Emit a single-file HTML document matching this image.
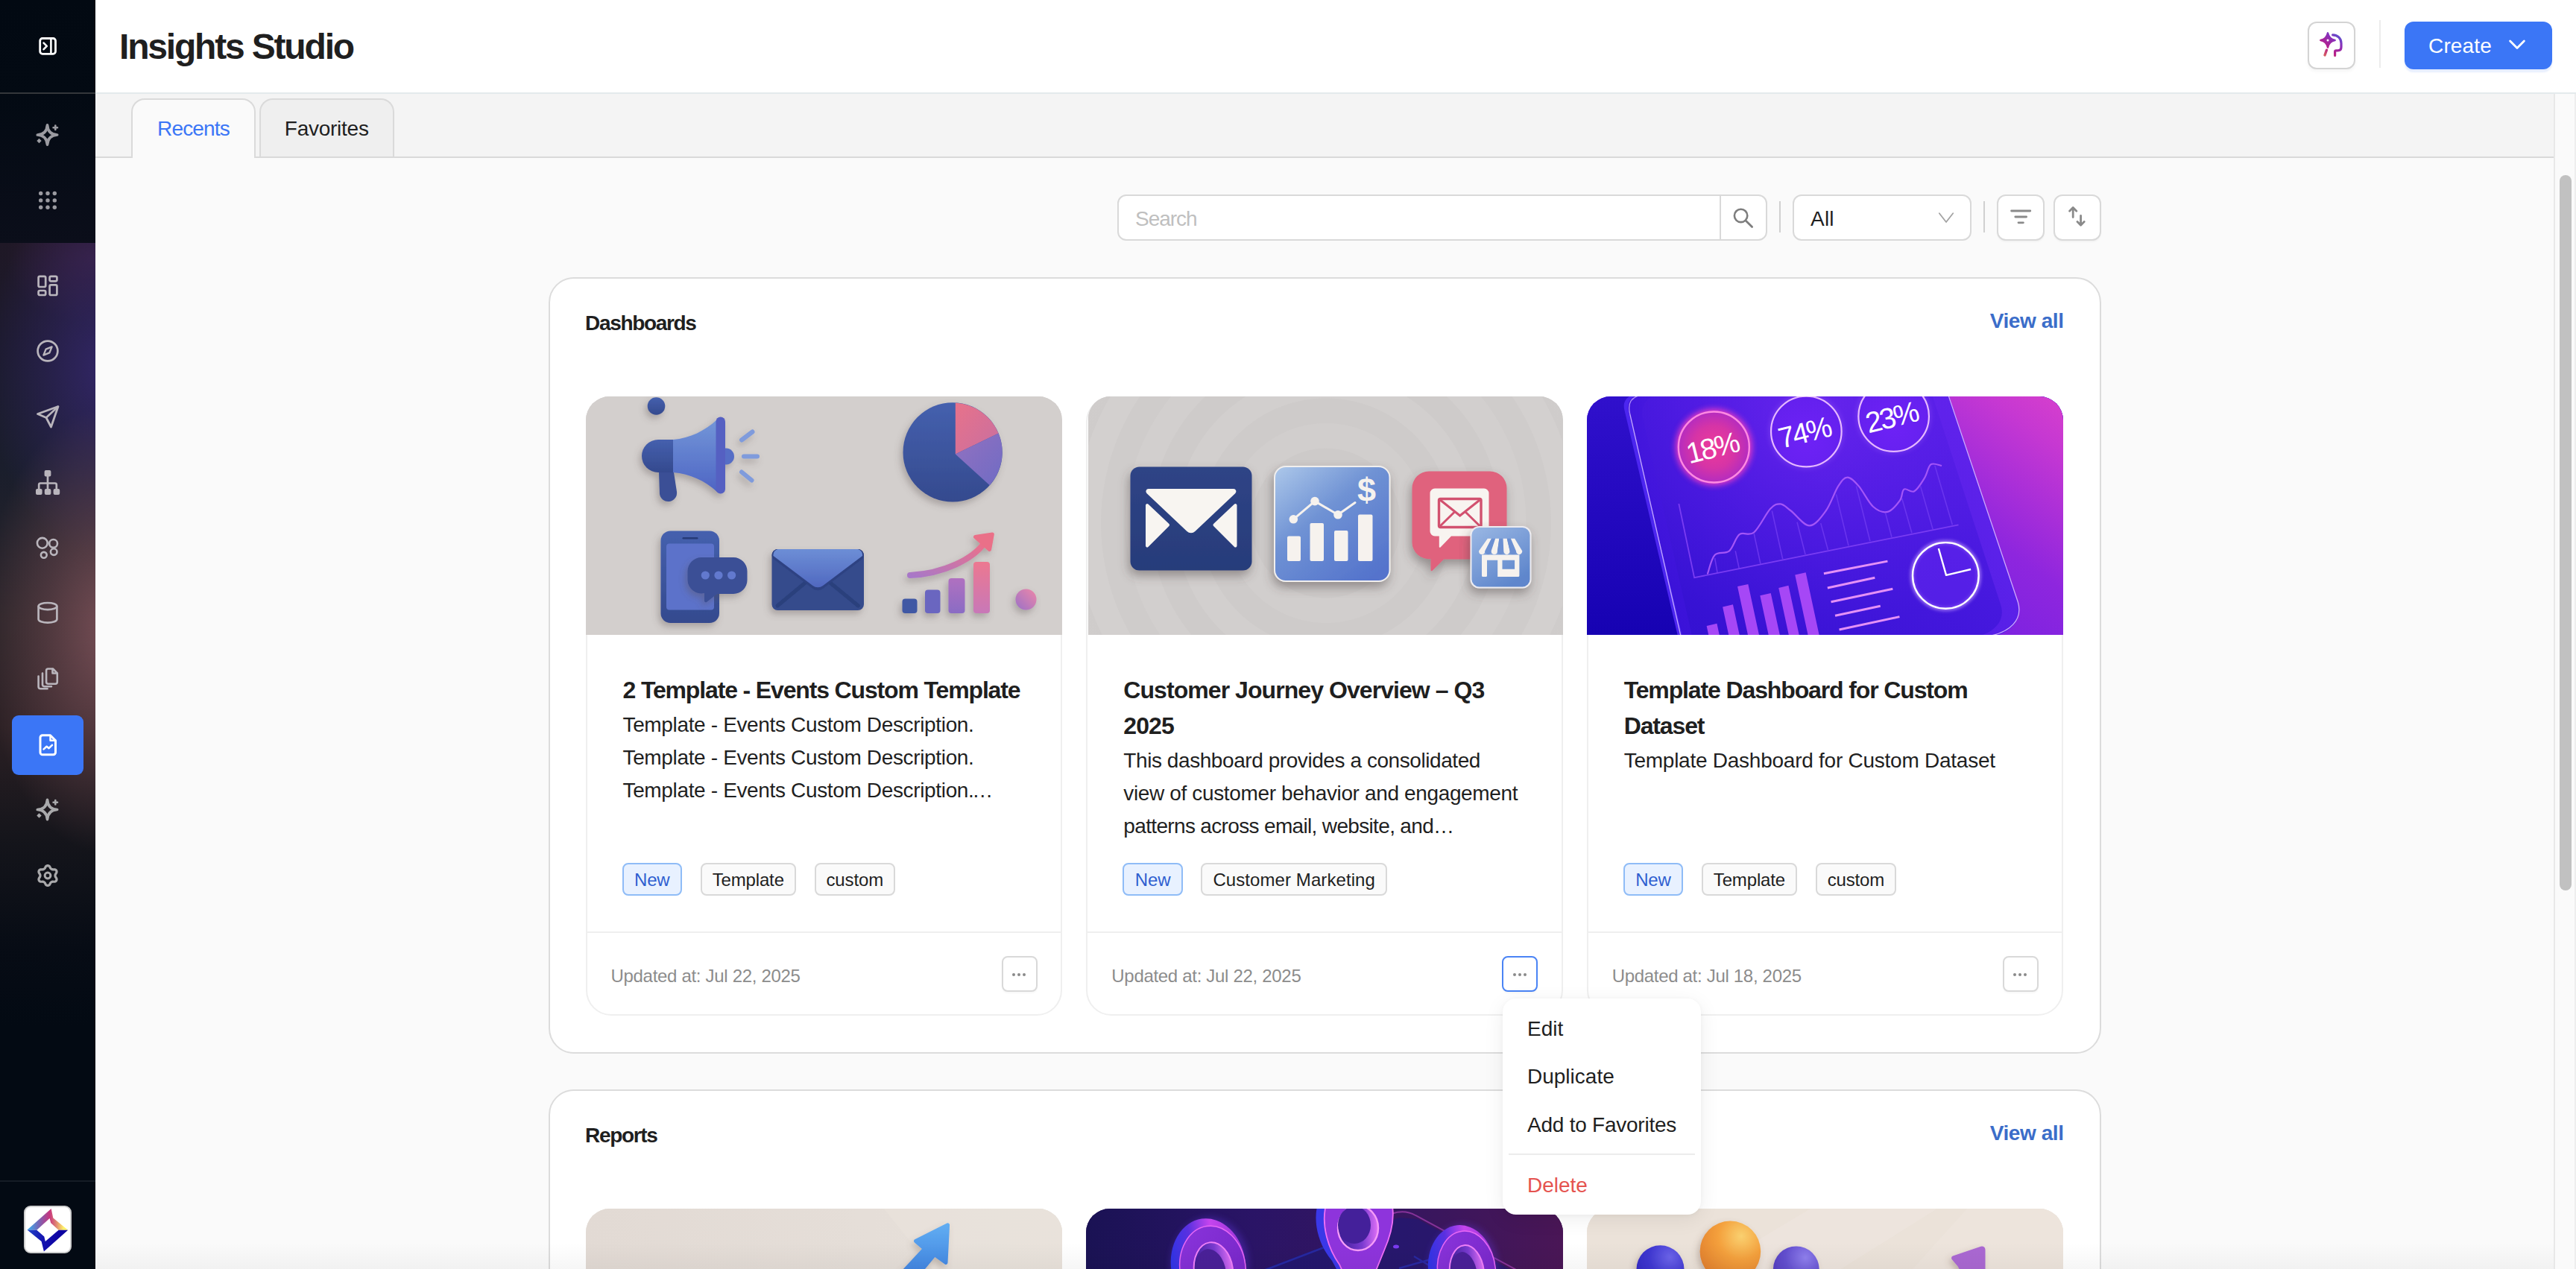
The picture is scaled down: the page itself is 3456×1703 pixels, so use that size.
<!DOCTYPE html>
<html>
<head>
<meta charset="utf-8">
<title>Insights Studio</title>
<style>
*{box-sizing:border-box;margin:0;padding:0}
html,body{width:3456px;height:1703px;overflow:hidden;background:#fafafa;font-family:"Liberation Sans",sans-serif;color:#1f1f1f}
.abs{position:absolute}
/* sidebar */
#side{position:absolute;left:0;top:0;width:128px;height:1703px;background:linear-gradient(180deg,#020912 0,#030a13 126px,#0b0e1a 326px,#030a13 327px);overflow:hidden}
#side .grad{position:absolute;left:0;top:326px;width:128px;height:1050px;
 background:
  radial-gradient(ellipse 170px 300px at 146px 520px, rgba(126,82,90,.9), rgba(126,82,90,.42) 50%, rgba(126,82,90,0) 100%),
  radial-gradient(ellipse 160px 250px at 142px 170px, rgba(54,40,112,.85), rgba(54,40,112,.4) 50%, rgba(54,40,112,0) 100%),
  radial-gradient(ellipse 120px 90px at 128px 20px, rgba(70,36,76,.6), rgba(70,36,76,0) 100%),
  linear-gradient(180deg,#1f1826 0,#1b1a2c 14%,#1a1e2c 29%,#2a2428 48%,#2b2024 62%,#15151b 76%,#070c15 90%,#030a13 100%);}
#side .ln{position:absolute;left:0;width:128px;height:2px;background:#20262e}
#side svg{position:absolute}
#side .act{position:absolute;left:16px;top:960px;width:96px;height:80px;border-radius:9px;background:#3b76f6}
#logo{position:absolute;left:32px;top:1618px;width:64px;height:64px;border-radius:9px;background:#fff;border:2px solid #cfcfcf}
/* header */
#hdr{position:absolute;left:128px;top:0;width:3328px;height:126px;background:#fff;border-bottom:2px solid #e4eaec}
#hdr h1{position:absolute;left:32px;top:31px;font-size:48px;line-height:64px;font-weight:700;letter-spacing:-2.18px;color:#1f1f1f;white-space:nowrap}
#aibtn{position:absolute;left:2968px;top:29px;width:64px;height:64px;border:2px solid #d4d4d4;border-radius:12px;background:#fff;box-shadow:0 3px 4px rgba(0,0,0,.04)}
#hdiv{position:absolute;left:3064px;top:27px;width:2px;height:64px;background:#ececec}
#create{position:absolute;left:3098px;top:29px;width:198px;height:64px;border-radius:12px;background:#3b76f6;box-shadow:0 4px 2px rgba(59,118,246,.12);color:#fff;font-size:28px;line-height:66px;padding-left:32px;letter-spacing:.16px}
/* tabs */
#tabs{position:absolute;left:128px;top:126px;width:3300px;height:86px;background:#f4f4f4;border-bottom:2px solid #d9d9d9}
.tab{position:absolute;top:6px;height:78px;border:2px solid #dadada;border-bottom:none;border-radius:18px 18px 0 0;font-size:28px;line-height:78px;text-align:center;white-space:nowrap}
#t1{left:48px;width:167px;background:#fafafa;color:#3b76f6;height:80px;letter-spacing:-.82px}
#t2{left:219.5px;width:181.5px;background:#efefef;color:#1f1f1f;height:78px;letter-spacing:-.26px}
/* scrollbar */
#sbar{position:absolute;left:3426px;top:126px;width:30px;height:1577px;background:#fafafa;border-left:2px solid #e8e8e8;border-right:2px solid #eee}
#sthumb{position:absolute;left:6px;top:109px;width:16px;height:960px;border-radius:8px;background:#c1c1c1}
/* toolbar */
.box{position:absolute;top:261px;height:62px;border:2px solid #d9d9d9;border-radius:12px;background:#fff}
.vdiv{position:absolute;top:270px;width:2px;height:42px;background:#d0d0d0}
/* panels */
.panel{position:absolute;left:735.5px;width:2083px;border:2px solid #dcdcdc;border-radius:34px;background:#fff}
.ph{position:absolute;left:47.5px;font-size:28px;font-weight:700;letter-spacing:-1.32px;color:#1f1f1f;white-space:nowrap}
.va{position:absolute;right:48px;font-size:28px;font-weight:700;letter-spacing:-.43px;color:#3b6dc9;white-space:nowrap}
.card{position:absolute;top:158px;width:639.33px;height:831px;border:2px solid #efefef;border-radius:34px;background:#fff}
.card .img{position:absolute;left:-2px;top:-2px;width:639.33px;height:320px;border-radius:32px 32px 0 0;overflow:hidden}
.card .img svg{display:block}
.card h3{position:absolute;left:48px;top:368px;width:580px;white-space:nowrap;font-size:32px;line-height:48px;font-weight:700;letter-spacing:-1.1px;color:#1f1f1f}
.card p{position:absolute;left:48px;width:560px;font-size:28px;line-height:44px;letter-spacing:-.35px;color:#1f1f1f;white-space:nowrap}
.tag{position:absolute;top:624.3px;height:43.4px;border:2px solid #d9d9d9;border-radius:8px;background:#fafafa;font-size:24px;line-height:41.5px;text-align:center;color:#1f1f1f;white-space:nowrap;letter-spacing:-.15px}
.tag.new{background:#e8f1ff;border-color:#8fbcf7;color:#2f5fd0}
.card .ft{position:absolute;left:0;top:715.5px;width:635.33px;height:2px;background:#efefef}
.card .upd{position:absolute;left:32px;top:760px;font-size:24px;line-height:32px;color:#8c8c8c;white-space:nowrap;letter-spacing:-.31px}
.more{position:absolute;left:556px;top:749px;width:48px;height:48px;border:2px solid #d9d9d9;border-radius:8px;background:#fff;box-shadow:0 2px 2px rgba(0,0,0,.03)}
.more.on{border-color:#4a84f5}
.more i{position:absolute;top:20.8px;width:4.4px;height:4.4px;background:#8a8a8a;border-radius:50%}
/* menu */
#menu{position:absolute;left:2016px;top:1340px;width:266px;height:290px;border-radius:18px;background:#fff;box-shadow:0 6px 28px rgba(0,0,0,.07),0 1px 6px rgba(0,0,0,.04)}
#menu div{position:absolute;left:33px;font-size:28px;line-height:40px;white-space:nowrap;letter-spacing:0;color:#1f1f1f}
#menu hr{position:absolute;left:8px;top:208px;width:250px;height:2px;border:0;background:#ececec}
</style>
</head>
<body>
<!-- SIDEBAR -->
<div id="side">
  <div class="grad"></div>
  <div class="ln" style="top:124px;background:#34373b"></div>
  <div class="ln" style="top:1584px;background:#161d26"></div>
  <div class="act"></div>
  <div id="logo"><svg width="60" height="60" viewBox="2 2 60 60" style="position:absolute;left:0;top:0"><defs><linearGradient id="lg1" x1="4.5" y1="0" x2="59" y2="0" gradientUnits="userSpaceOnUse"><stop offset="0" stop-color="#35b2f2"/><stop offset=".28" stop-color="#7567b8"/><stop offset=".55" stop-color="#c7357f"/><stop offset=".72" stop-color="#e08a72"/><stop offset=".9" stop-color="#fff46a"/><stop offset="1" stop-color="#fff46a"/></linearGradient><linearGradient id="lg2" x1="4.5" y1="33" x2="50" y2="45" gradientUnits="userSpaceOnUse"><stop offset="0" stop-color="#2244c8"/><stop offset=".5" stop-color="#1414b0"/><stop offset="1" stop-color="#0c00a0"/></linearGradient></defs><path d="M4.5,32.6L36.7,3.9L39.3,16.5L59.2,32.7H46.6L36.2,23.3L34.6,17L17.3,32.7z" fill="url(#lg1)"/><path d="M4.5,32.5L17.3,32.7L27.3,41.6L28.8,47.9L46.6,32.7H59.2L26.9,61.5L23.6,47.9z" fill="url(#lg2)"/></svg></div>
  <svg class="abs" style="left:0;top:0" width="128" height="1703" viewBox="0 0 128 1703" fill="none"><rect x="53.7" y="51.5" width="20.8" height="20.8" rx="3.2" stroke="#fff" stroke-width="2.8"/><path d="M68.4,52v20" stroke="#fff" stroke-width="2.6"/><path d="M58.6,57.6l4.2,4.3l-4.2,4.3" stroke="#fff" stroke-width="2.6" stroke-linecap="round" stroke-linejoin="round"/><path d="M63.5,167.8 Q64.3,180.2 76.7,181 Q64.3,181.8 63.5,194.2 Q62.7,181.8 50.3,181 Q62.7,180.2 63.5,167.8Z" fill="none" stroke="#9b9ba1" stroke-width="3.7" stroke-linejoin="round"/><path d="M74.3,168.6v5.4M71.6,171.3h5.4" stroke="#9b9ba1" stroke-width="2.6" stroke-linecap="round"/><path d="M52.5,185.8l3.2,3.2l-3.2,3.2l-3.2,-3.2z" fill="#9b9ba1"/><circle cx="54.7" cy="259.5" r="2.7" fill="#9b9ba1"/><circle cx="64.0" cy="259.5" r="2.7" fill="#9b9ba1"/><circle cx="73.3" cy="259.5" r="2.7" fill="#9b9ba1"/><circle cx="54.7" cy="268.9" r="2.7" fill="#9b9ba1"/><circle cx="64.0" cy="268.9" r="2.7" fill="#9b9ba1"/><circle cx="73.3" cy="268.9" r="2.7" fill="#9b9ba1"/><circle cx="54.7" cy="278.3" r="2.7" fill="#9b9ba1"/><circle cx="64.0" cy="278.3" r="2.7" fill="#9b9ba1"/><circle cx="73.3" cy="278.3" r="2.7" fill="#9b9ba1"/><g stroke="#b9b5bc" stroke-width="2.7" stroke-linejoin="round"><rect x="51.6" y="370.8" width="9.6" height="14.2" rx="1.8"/><rect x="66.6" y="370.8" width="9.8" height="6.6" rx="1.8"/><rect x="51.6" y="390" width="9.6" height="6" rx="1.8"/><rect x="66.6" y="382.4" width="9.8" height="13.6" rx="1.8"/></g><circle cx="64" cy="471" r="13.4" stroke="#b9b5bc" stroke-width="2.7"/><path d="M69.6,465.4l-3.2,8l-8,3.2l3.2,-8z" stroke="#b9b5bc" stroke-width="2.4" stroke-linejoin="round"/><path d="M78,545.5L50.5,555.5l11.5,5l6.5,12.5z" stroke="#b9b5bc" stroke-width="2.8" stroke-linejoin="round"/><path d="M62,560.5L78,545.5" stroke="#b9b5bc" stroke-width="2.6"/><g fill="#b9b5bc"><rect x="59.6" y="631" width="8.8" height="8.6" rx="2"/><rect x="48" y="656" width="8.6" height="8" rx="2"/><rect x="59.8" y="656" width="8.6" height="8" rx="2"/><rect x="71.6" y="656" width="8.6" height="8" rx="2"/></g><path d="M64,639v17M52.2,656v-5.5a2,2 0 0 1 2,-2h19.6a2,2 0 0 1 2,2v5.5" stroke="#b9b5bc" stroke-width="2.7"/><g stroke="#b9b5bc" stroke-width="2.6"><circle cx="56.8" cy="728.8" r="6.9"/><circle cx="71.6" cy="729.4" r="5.4"/><circle cx="58.8" cy="744.8" r="3.9"/><circle cx="72.2" cy="740.6" r="4.3"/></g><g stroke="#b9b5bc" stroke-width="2.7"><ellipse cx="64" cy="813.6" rx="12.4" ry="4.6"/><path d="M51.6,813.6v17.4c0,2.6 5.5,4.7 12.4,4.7s12.4,-2.1 12.4,-4.7v-17.4"/></g><g stroke="#b9b5bc" stroke-width="2.6" stroke-linejoin="round" stroke-linecap="round"><path d="M64.5,897.5h6.5l5.8,5.8v12a2.4,2.4 0 0 1 -2.4,2.4h-9.9a2.4,2.4 0 0 1 -2.4,-2.4v-15.4a2.4,2.4 0 0 1 2.4,-2.4z"/><path d="M70.5,898v5.5h5.8"/><path d="M57,903.5v15.2a2.6,2.6 0 0 0 2.6,2.6h9.4"/><path d="M51.6,907.5v14a2.8,2.8 0 0 0 2.8,2.8h9.2"/></g><g stroke="#fff" stroke-width="3" stroke-linejoin="round" stroke-linecap="round"><path d="M57,986.8h10.5l7,7v16a3,3 0 0 1 -3,3h-14.5a3,3 0 0 1 -3,-3v-20a3,3 0 0 1 3,-3z"/><path d="M67.5,987.2v6.6h6.6" stroke-width="2.4"/><path d="M58.6,1005.4l4,-3.6l3,2.4l4.4,-4.4" stroke-width="2.6"/></g><path d="M63.5,1073.3 Q64.3,1085.7 76.7,1086.5 Q64.3,1087.3 63.5,1099.7 Q62.7,1087.3 50.3,1086.5 Q62.7,1085.7 63.5,1073.3Z" fill="none" stroke="#a9a9ab" stroke-width="3.7" stroke-linejoin="round"/><path d="M74.3,1074.1v5.4M71.6,1076.8h5.4" stroke="#a9a9ab" stroke-width="2.6" stroke-linecap="round"/><path d="M52.5,1091.3l3.2,3.2l-3.2,3.2l-3.2,-3.2z" fill="#a9a9ab"/><path d="M64.00,1161.60L65.15,1161.81L66.21,1162.45L67.03,1163.70L67.64,1164.99L68.29,1165.79L69.00,1166.34L69.83,1166.68L70.85,1166.84L72.27,1166.73L73.76,1166.81L74.84,1167.41L75.60,1168.30L76.00,1169.41L75.98,1170.64L75.30,1171.97L74.49,1173.15L74.12,1174.11L74.00,1175.00L74.12,1175.89L74.49,1176.85L75.30,1178.03L75.98,1179.36L76.00,1180.59L75.60,1181.70L74.84,1182.59L73.76,1183.19L72.27,1183.27L70.85,1183.16L69.83,1183.32L69.00,1183.66L68.29,1184.21L67.64,1185.01L67.03,1186.30L66.21,1187.55L65.15,1188.19L64.00,1188.40L62.85,1188.19L61.79,1187.55L60.97,1186.30L60.36,1185.01L59.71,1184.21L59.00,1183.66L58.17,1183.32L57.15,1183.16L55.73,1183.27L54.24,1183.19L53.16,1182.59L52.40,1181.70L52.00,1180.59L52.02,1179.36L52.70,1178.03L53.51,1176.85L53.88,1175.89L54.00,1175.00L53.88,1174.11L53.51,1173.15L52.70,1171.97L52.02,1170.64L52.00,1169.41L52.40,1168.30L53.16,1167.41L54.24,1166.81L55.73,1166.73L57.15,1166.84L58.17,1166.68L59.00,1166.34L59.71,1165.79L60.36,1164.99L60.97,1163.70L61.79,1162.45L62.85,1161.81Z" fill="none" stroke="#a9a9ab" stroke-width="3.2" stroke-linejoin="round"/><circle cx="64" cy="1175" r="3.9" fill="none" stroke="#a9a9ab" stroke-width="3"/></svg>
</div>

<!-- HEADER -->
<div id="hdr">
  <h1>Insights Studio</h1>
  <div id="aibtn"><svg width="60" height="60" viewBox="2 2 60 60" style="position:absolute;left:0;top:0" fill="none"><defs><linearGradient id="ag" x1="46" y1="16" x2="22" y2="46" gradientUnits="userSpaceOnUse"><stop offset="0" stop-color="#4a63d8"/><stop offset=".35" stop-color="#8a2fb8"/><stop offset=".7" stop-color="#b51f8c"/><stop offset="1" stop-color="#d9605c"/></linearGradient></defs><path d="M27,15.4Q28.6,23.4 36.6,25Q28.6,26.6 27,34.6Q25.4,26.6 17.4,25Q25.4,23.4 27,15.4Z" fill="url(#ag)" stroke="url(#ag)" stroke-width="2.6" stroke-linejoin="round"/><circle cx="27" cy="25" r="1.5" fill="#fff"/><path d="M33.6,17.8C40.6,18 45,23 45,29v5.2c0,3 -2,4.6 -4.6,4.6h-2.2c-1,0 -1.6,.6 -1.6,1.6v5.2" stroke="url(#ag)" stroke-width="3.2" stroke-linecap="round" stroke-linejoin="round"/><path d="M25.4,38.2L23,45" stroke="url(#ag)" stroke-width="3.4" stroke-linecap="round"/></svg></div>
  <div id="hdiv"></div>
  <div id="create">Create<svg class="abs" style="left:139px;top:23px" width="24" height="16" viewBox="0 0 24 16" fill="none"><path d="M2.6,3L12,12.4L21.4,3" stroke="#fff" stroke-width="2.8" stroke-linecap="round" stroke-linejoin="round"/></svg></div>
</div>

<!-- TABS -->
<div id="tabs">
  <div class="tab" id="t1">Recents</div>
  <div class="tab" id="t2">Favorites</div>
</div>
<div id="sbar"><div id="sthumb"></div></div>

<!-- TOOLBAR -->
<div class="box" style="left:1499px;width:872px"></div>
<div class="abs" style="left:2307px;top:263px;width:2px;height:58px;background:#d9d9d9"></div>
<div class="abs" style="left:1523px;top:276px;font-size:28px;line-height:36px;color:#bfbfbf;letter-spacing:-1.05px">Search</div>
<div class="vdiv" style="left:2387px"></div>
<div class="box" style="left:2405px;width:240px"></div>
<div class="abs" style="left:2429px;top:276px;font-size:28px;line-height:36px;color:#1f1f1f;letter-spacing:.2px">All</div>
<div class="vdiv" style="left:2661px"></div>
<div class="box" style="left:2679px;width:64px;box-shadow:0 2px 2px rgba(0,0,0,.03)"></div>
<div class="box" style="left:2755px;width:64px;box-shadow:0 2px 2px rgba(0,0,0,.03)"></div>

<svg class="abs" style="left:2300px;top:255px" width="530" height="76" viewBox="2300 255 530 76" fill="none"><circle cx="2335.6" cy="289.4" r="8.7" stroke="#7d7d7d" stroke-width="2.6"/><path d="M2342,296l8.6,8.6" stroke="#7d7d7d" stroke-width="2.8" stroke-linecap="round"/><path d="M2601.8,286.2L2611,298L2620.2,286.2" stroke="#a3a3a3" stroke-width="1.8" stroke-linecap="round" stroke-linejoin="round"/><path d="M2698.6,283h25.2M2703.8,291h14.8M2708,298.8h6.4" stroke="#8a8a8a" stroke-width="2.8" stroke-linecap="round"/><path d="M2781.2,291.5v-12.5M2776.6,283.2l4.6,-4.6l4.6,4.6M2791.6,289.5v12.5M2787,297.6l4.6,4.6l4.6,-4.6" stroke="#8a8a8a" stroke-width="2.8" stroke-linecap="round" stroke-linejoin="round"/></svg>

<!-- DASHBOARDS PANEL -->
<div class="panel" id="p1" style="top:372px;height:1042px">
  <div class="ph" style="top:42px;line-height:36px">Dashboards</div>
  <div class="va" style="top:39px;line-height:36px">View all</div>

  <div class="card" style="left:48px">
    <div class="img" id="img1" style="background:#d3cfcd"><svg width="638" height="321" viewBox="0 0 638 321">
<defs>
<filter id="i1s" x="-20%" y="-20%" width="150%" height="150%"><feDropShadow dx="-3" dy="5" stdDeviation="5" flood-color="#5a5050" flood-opacity=".35"/></filter>
<linearGradient id="i1a" x1="0" y1="0" x2="0" y2="1"><stop offset="0" stop-color="#4560ae"/><stop offset="1" stop-color="#344a8e"/></linearGradient>
<linearGradient id="i1b" x1="0" y1="0" x2="0" y2="1"><stop offset="0" stop-color="#7396d8"/><stop offset="1" stop-color="#4e65c4"/></linearGradient>
<linearGradient id="i1c" x1="0" y1="0" x2="1" y2="1"><stop offset="0" stop-color="#e8728a"/><stop offset="1" stop-color="#c86fa0"/></linearGradient>
<linearGradient id="i1d" x1="0" y1="0" x2="1" y2="1"><stop offset="0" stop-color="#9370c0"/><stop offset="1" stop-color="#6f6cc4"/></linearGradient>
<linearGradient id="i1e" x1="0" y1="1" x2="1" y2="0"><stop offset="0" stop-color="#a878c8"/><stop offset="1" stop-color="#ee7088"/></linearGradient>
<linearGradient id="i1f" x1="0" y1="0" x2="0" y2="1"><stop offset="0" stop-color="#6d8ed6"/><stop offset="1" stop-color="#5068c0"/></linearGradient>
<linearGradient id="i1g" x1="0" y1="0" x2="0" y2="1"><stop offset="0" stop-color="#b070c0"/><stop offset="1" stop-color="#8a6cc4"/></linearGradient>
<linearGradient id="i1h" x1="0" y1="0" x2="0" y2="1"><stop offset="0" stop-color="#ec7890"/><stop offset="1" stop-color="#c878b8"/></linearGradient>
<linearGradient id="i1i" x1="1" y1="0" x2="0" y2="1"><stop offset="0" stop-color="#ee88a8"/><stop offset="1" stop-color="#9a70c8"/></linearGradient>
</defs>
<rect width="638" height="321" fill="#d3cfcd"/>
<g filter="url(#i1s)">
 <!-- small ball -->
 <circle cx="94.5" cy="13" r="11.8" fill="url(#i1a)"/>
 <!-- megaphone -->
 <path d="M98,102 l20,0 l4,26 a11.5,11.5 0 0 1 -23,3 z" fill="#3a5096"/>
 <path d="M97,58 h21 v44 h-21 a22,22 0 0 1 0,-44z" fill="url(#i1a)"/>
 <circle cx="188" cy="80.5" r="11" fill="#566ec6"/>
 <path d="M117,58 C140,56 160,46 176,31 V128 C160,113 140,104 117,102z" fill="url(#i1b)"/>
 <rect x="174.5" y="27.5" width="12.5" height="103" rx="6.2" fill="#5560c2"/>
 <path d="M209,58.5 L223.5,47.5 M212,80.5 H230 M209,101.5 L222.5,112.5" stroke="#7f9bdc" stroke-width="6" stroke-linecap="round" fill="none"/>
 <!-- pie -->
 <circle cx="492.1" cy="74.9" r="66.6" fill="url(#i1a)"/>
 <path d="M495.8,77.6 L495.8,8.4 A66.6,66.6 0 0 1 553.6,49.6 Z" fill="url(#i1c)"/>
 <path d="M495.8,77.6 L553.6,49.6 A66.6,66.6 0 0 1 541.8,119.2 Z" fill="url(#i1d)"/>
 <!-- phone -->
 <rect x="100.5" y="180.5" width="78.5" height="123.5" rx="13" fill="url(#i1a)"/>
 <rect x="108" y="197.5" width="64" height="89" rx="4" fill="#5c72ca"/>
 <rect x="129.5" y="189" width="21" height="2.6" rx="1.3" fill="#263a78"/>
</g>
<g filter="url(#i1s)">
 <!-- chat bubble -->
 <path d="M155,216 h43 a18.5,18.5 0 0 1 18.5,18.5 v12 a18.5,18.5 0 0 1 -18.5,18.5 h-22 l-14,11 a2,2 0 0 1 -3,-2 v-10 a18.5,18.5 0 0 1 -22.5,-17.500 v-12 a18.500,18.500 0 0 1 18.500,-18.500z" fill="#3a5096"/>
 <circle cx="160.300" cy="240" r="5.600" fill="#6279ce"/><circle cx="178" cy="240" r="5.600" fill="#6279ce"/><circle cx="195.600" cy="240" r="5.600" fill="#6279ce"/>
 <!-- envelope -->
 <rect x="249.500" y="205" width="123.500" height="82" rx="8" fill="#344b8c"/>
 <path d="M257,281 L298,247 M365.500,281 L324,247" stroke="#2a3f7c" stroke-width="5" stroke-linecap="round"/>
 <path d="M257.500,205 h107.500 a8,8 0 0 1 6,13 l-53,40 a11,11 0 0 1 -13.500,0 l-53,-40 a8,8 0 0 1 6,-13z" fill="#2d4282"/>
 <path d="M257.500,205 h107.500 a8,8 0 0 1 6,9 l-53,40 a11,11 0 0 1 -13.500,0 l-53,-40 a8,8 0 0 1 6,-9z" fill="url(#i1f)"/>
 <!-- bars -->
 <rect x="424.500" y="271.500" width="20" height="19.500" rx="4" fill="#3f58a4"/>
 <rect x="455" y="259.500" width="20.500" height="31.500" rx="4" fill="#6b66c0"/>
 <rect x="486.500" y="244" width="22" height="47" rx="4" fill="url(#i1g)"/>
 <rect x="520" y="222" width="22" height="69" rx="4" fill="url(#i1h)"/>
 <path d="M435,240 C480,238 520,218 535,196" stroke="url(#i1e)" stroke-width="8" stroke-linecap="round" fill="none"/>
 <path d="M522,186 L545,182.500 a2.500,2.500 0 0 1 2.800,3 L544,206 a2.500,2.500 0 0 1 -4,1.500 L521,190.500 a2.500,2.500 0 0 1 1,-4.500z" fill="#ea7088"/>
 <circle cx="590.500" cy="272.500" r="14" fill="url(#i1i)"/>
</g>
</svg></div>
    <h3 style="letter-spacing:-1.15px">2 Template - Events Custom Template</h3>
    <p style="top:417px">Template - Events Custom Description.<br>Template - Events Custom Description.<br>Template - Events Custom Description<span style="letter-spacing:-2.6px">.…</span></p>
    <div class="tag new" style="left:47px;width:80.5px">New</div>
    <div class="tag" style="left:152px;width:128.5px">Template</div>
    <div class="tag" style="left:305px;width:108.5px">custom</div>
    <div class="ft"></div>
    <div class="upd">Updated at: Jul 22, 2025</div>
    <div class="more"><i style="left:12.3px"></i><i style="left:19.3px"></i><i style="left:26.3px"></i></div>
  </div>

  <div class="card" style="left:719.83px">
    <div class="img" id="img2" style="background:#cfcccb;left:.67px;width:637px;border-radius:30px 32px 0 0"><svg width="638" height="321" viewBox="2 0 638 321">
<defs>
<filter id="i2s" x="-20%" y="-20%" width="150%" height="160%"><feDropShadow dx="-2" dy="7" stdDeviation="7" flood-color="#4a4040" flood-opacity=".45"/></filter>
<radialGradient id="i2r" cx="321" cy="170" r="420" gradientUnits="userSpaceOnUse">
<stop offset="0" stop-color="#cdcac9"/><stop offset=".078" stop-color="#cdcac9"/><stop offset=".08" stop-color="#d1cecd"/><stop offset=".158" stop-color="#d1cecd"/><stop offset=".16" stop-color="#cdcac9"/><stop offset=".238" stop-color="#cdcac9"/><stop offset=".24" stop-color="#d1cecd"/><stop offset=".318" stop-color="#d1cecd"/><stop offset=".32" stop-color="#cecbca"/><stop offset=".398" stop-color="#cecbca"/><stop offset=".4" stop-color="#d2cfce"/><stop offset=".478" stop-color="#d2cfce"/><stop offset=".48" stop-color="#cecbca"/><stop offset=".558" stop-color="#cecbca"/><stop offset=".56" stop-color="#d2cfce"/><stop offset=".638" stop-color="#d2cfce"/><stop offset=".64" stop-color="#cfcccb"/><stop offset=".718" stop-color="#cfcccb"/><stop offset=".72" stop-color="#d3d0cf"/><stop offset=".798" stop-color="#d3d0cf"/><stop offset=".8" stop-color="#cfcccb"/><stop offset="1" stop-color="#d2cfce"/>
</radialGradient>
<linearGradient id="i2a" x1="0" y1="0" x2="0" y2="1"><stop offset="0" stop-color="#2f4486"/><stop offset="1" stop-color="#273c7a"/></linearGradient>
<linearGradient id="i2b" x1="0" y1="0" x2=".8" y2="1"><stop offset="0" stop-color="#adc8ea"/><stop offset=".45" stop-color="#6f92d4"/><stop offset="1" stop-color="#5473cc"/></linearGradient>
<linearGradient id="i2c" x1="0" y1="0" x2=".6" y2="1"><stop offset="0" stop-color="#9bb8e4"/><stop offset="1" stop-color="#5e86cc"/></linearGradient>
</defs>
<rect width="638" height="321" fill="url(#i2r)"/>
<!-- envelope tile -->
<g filter="url(#i2s)"><rect x="58.500" y="94.500" width="163" height="139" rx="12" fill="url(#i2a)"/></g>
<g fill="#f8f5f1">
<path d="M83,124 h114 a3.500,3.500 0 0 1 2.400,6 l-54,51 a8,8 0 0 1 -11,0 l-54,-51 a3.500,3.500 0 0 1 2.400,-6z"/>
<path d="M79,146 a2,2 0 0 1 3.400,-1.400 l28,26.500 a2,2 0 0 1 0,2.900 l-28,28 a2,2 0 0 1 -3.400,-1.400z"/>
<path d="M201.500,146 a2,2 0 0 0 -3.400,-1.400 l-28,26.500 a2,2 0 0 0 0,2.900 l28,28 a2,2 0 0 0 3.400,-1.400z"/>
</g>
<!-- chart tile -->
<g filter="url(#i2s)"><rect x="252" y="94" width="154.500" height="154" rx="15" fill="url(#i2b)" stroke="#f1efee" stroke-width="2"/></g>
<g fill="#f6f2ee">
<rect x="269" y="187.500" width="18" height="33.500" rx="2"/><rect x="299.500" y="170" width="18.500" height="51" rx="2"/><rect x="332" y="180" width="18.500" height="41" rx="2"/><rect x="364" y="158.500" width="19.500" height="62.500" rx="2"/>
<circle cx="277.300" cy="164.800" r="5.800"/><circle cx="306" cy="140.600" r="5.800"/><circle cx="337" cy="158.800" r="5.800"/>
</g>
<path d="M277.300,164.800 L306,140.600 L337,158.800 L360,142.500" stroke="#f6f2ee" stroke-width="3" fill="none" stroke-linecap="round" stroke-linejoin="round"/>
<text x="375.500" y="141" font-family="Liberation Sans, sans-serif" font-weight="700" font-size="45" text-anchor="middle" fill="#f6f2ee">$</text>
<!-- pink bubble -->
<g filter="url(#i2s)"><path d="M459,100.500 h82 a22.500,22.500 0 0 1 22.500,22.500 v73 a22.500,22.500 0 0 1 -22.500,22.500 h-62 l-15.500,15.500 a1.200,1.200 0 0 1 -2,-1 v-15 a22.500,22.500 0 0 1 -25,-22 v-73 a22.500,22.500 0 0 1 22.500,-22.500z" fill="#e0627d"/></g>
<path d="M467,123.500 h66 a6.500,6.500 0 0 1 6.500,6.500 v51 a6.500,6.500 0 0 1 -6.500,6.500 h-44 l-14.500,15 a1,1 0 0 1 -1.700,-.8 v-14.200 h-5.800 a6.500,6.500 0 0 1 -6.500,-6.500 v-51 a6.500,6.500 0 0 1 6.500,-6.500z" fill="#f8f4f0"/>
<rect x="472.500" y="137.500" width="56.500" height="38" rx="2" fill="none" stroke="#d2516f" stroke-width="3.400"/>
<path d="M473,138 L500.700,160 L528.500,138 M473,175 L494,154.500 M528.500,175 L507.500,154.500" stroke="#d2516f" stroke-width="3" fill="none"/>
<!-- store tile -->
<g filter="url(#i2s)"><rect x="515.500" y="175" width="80" height="81.500" rx="11" fill="url(#i2c)" stroke="#ecebf0" stroke-width="2"/></g>
<path d="M537.80,190.7 L542.99,190.7 L534.33,207.5 A4.17,4.77 0 0 1 526.00,207.5 Z" fill="#f6f2ee"/><path d="M542.99,190.7 L548.18,190.7 L542.66,207.5 A4.16,4.76 0 0 1 534.33,207.5 Z" fill="#6c90d2"/><path d="M548.18,190.7 L553.37,190.7 L550.99,207.5 A4.17,4.77 0 0 1 542.66,207.5 Z" fill="#f6f2ee"/><path d="M553.37,190.7 L558.56,190.7 L559.32,207.5 A4.17,4.77 0 0 1 550.99,207.5 Z" fill="#6c90d2"/><path d="M558.56,190.7 L563.75,190.7 L567.65,207.5 A4.16,4.76 0 0 1 559.32,207.5 Z" fill="#f6f2ee"/><path d="M563.75,190.7 L568.94,190.7 L575.98,207.5 A4.17,4.77 0 0 1 567.65,207.5 Z" fill="#6c90d2"/><path d="M568.94,190.7 L574.13,190.7 L584.31,207.5 A4.16,4.76 0 0 1 575.98,207.5 Z" fill="#f6f2ee"/><path d="M530,212.5 H580.4 V240.4 a1.5,1.5 0 0 1 -1.5,1.5 H551.2 V219.8 H537 V240.4 a1.5,1.5 0 0 1 -1.5,1.5 H531.5 a1.5,1.5 0 0 1 -1.5,-1.5 Z M557.5,219.8 H574.1 V231.7 H557.5 Z" fill="#f6f2ee" fill-rule="evenodd"/>
</svg></div>
    <h3 style="letter-spacing:-.94px">Customer Journey Overview – Q3<br>2025</h3>
    <p style="top:465px"><span style="letter-spacing:-.43px">This dashboard provides a consolidated</span><br><span style="letter-spacing:-.36px">view of customer behavior and engagement</span><br><span style="letter-spacing:-.66px">patterns across email, website, and…</span></p>
    <div class="tag new" style="left:47px;width:80.5px">New</div>
    <div class="tag" style="left:152px;width:249.7px;letter-spacing:.08px">Customer Marketing</div>
    <div class="ft"></div>
    <div class="upd">Updated at: Jul 22, 2025</div>
    <div class="more on"><i style="left:12.3px"></i><i style="left:19.3px"></i><i style="left:26.3px"></i></div>
  </div>

  <div class="card" style="left:1391.17px">
    <div class="img" id="img3" style="background:#4a1be0"><svg width="640" height="321" viewBox="-1.33 0 640 321">
<defs>
<linearGradient id="i3bg" x1="0" y1="0" x2="0" y2="1"><stop offset="0" stop-color="#3010cc"/><stop offset="1" stop-color="#1602b2"/></linearGradient>
<linearGradient id="i3r" x1=".2" y1="1" x2="1" y2="0"><stop offset="0" stop-color="#6a1ee4"/><stop offset=".5" stop-color="#8e26de"/><stop offset=".85" stop-color="#c638d2"/><stop offset="1" stop-color="#d840cc"/></linearGradient>
<linearGradient id="i3t" x1="0" y1=".6" x2="1" y2=".3"><stop offset="0" stop-color="#3a12d8"/><stop offset=".5" stop-color="#4a1ae2"/><stop offset="1" stop-color="#6224ec"/></linearGradient>
<linearGradient id="i3sc" x1="0" y1="1" x2="1" y2="0"><stop offset="0" stop-color="#3210d0"/><stop offset=".55" stop-color="#4618de"/><stop offset="1" stop-color="#5a20e8"/></linearGradient>
<radialGradient id="i3p" cx=".5" cy=".5" r=".5"><stop offset="0" stop-color="#ee3a9a"/><stop offset=".6" stop-color="#d634a6"/><stop offset="1" stop-color="#b42cc0"/></radialGradient>
<radialGradient id="i3v" cx=".5" cy=".6" r=".6"><stop offset="0" stop-color="#6e22f6"/><stop offset="1" stop-color="#6420ee"/></radialGradient>
<radialGradient id="i3gl" cx="300" cy="20" r="300" gradientUnits="userSpaceOnUse"><stop offset="0" stop-color="#7c2cf6" stop-opacity=".55"/><stop offset=".55" stop-color="#6a24f0" stop-opacity=".25"/><stop offset="1" stop-color="#5a20e8" stop-opacity="0"/></radialGradient>
<clipPath id="i3cl"><path d="M70,-2 L484,-2 L577,276 C584,300 566,318 540,323 L127,323 L54,18 C52,6 60,-2 70,-2 Z"/></clipPath>
<filter id="i3g" x="-30%" y="-30%" width="160%" height="160%"><feGaussianBlur stdDeviation="4"/></filter>
<filter id="i3g2" x="-30%" y="-30%" width="160%" height="160%"><feGaussianBlur stdDeviation="2.2"/></filter>
</defs>
<rect x="-2" width="644" height="321" fill="url(#i3bg)"/>
<path d="M300,-2 H642 V323 H300z" fill="url(#i3r)"/>
<!-- tablet -->
<path d="M64,-2 L484,-2 L577,276 C584,300 566,318 540,323 L121,323 L49,18 C46,6 54,-2 64,-2 Z" fill="#4c26f0"/>
<path d="M70,-2 L484,-2 L577,276 C584,300 566,318 540,323 L127,323 L54,18 C52,6 60,-2 70,-2 Z" fill="url(#i3t)"/>
<path d="M92,-2 C78,2 70,14 74,30 L140,323 L520,323 C548,316 560,300 554,280 L462,-2 Z" fill="url(#i3sc)"/>
<g clip-path="url(#i3cl)"><rect x="0" y="-2" width="640" height="325" fill="url(#i3gl)"/></g>
<path d="M56.500,24 L125,323" stroke="#c4a8ff" stroke-width="1.300" fill="none"/>
<path d="M56.500,24 C53,10 58,2 68,-1" stroke="#c4a8ff" stroke-width="1.300" fill="none" opacity=".8"/>
<path d="M483.500,-2 L577,276 C584,300 566,317 536,322" stroke="#d9b8ff" stroke-width="1.300" fill="none" opacity=".9"/>
<!-- chart -->
<path d="M170.3,217.0L173.7,236.3M197.9,207.3L202.9,230.8M222.8,183.9L231.6,224.7M247.0,153.5L261.4,218.3M280.7,168.7L291.7,212.0M312.4,170.1L322.1,205.9M333.1,131.4L349.7,200.4M360.1,120.4L378.6,194.3M399.3,156.8L407.6,188.8M421.4,137.0L434.6,183.3M446.2,120.4L462.8,178.3M465.5,92.8L489.0,172.3" stroke="#6a34ee" stroke-width="1.600" fill="none"/>
<path d="M122,144 L142.800,243.200 L497.200,172.300" stroke="#7a3cf2" stroke-width="1.800" fill="none"/>
<path d="M160.7,237.7 C162.3,233.5 165.5,217.9 170.3,212.8 C175.2,207.8 184.1,211.9 189.7,207.3 C195.2,202.7 197.9,189.4 203.4,185.2 C209.0,181.1 215.9,188.2 222.8,182.5 C229.7,176.7 238.9,157.1 244.8,150.8 C250.8,144.4 254.0,144.0 258.6,144.4 C263.2,144.9 266.0,148.7 272.4,153.5 C278.9,158.3 289.4,173.4 297.2,173.4 C305.1,173.4 312.9,162.3 319.3,153.5 C325.7,144.7 331.0,127.9 335.9,120.4 C340.7,112.9 343.7,108.6 348.3,108.6 C352.9,108.6 357.7,113.8 363.4,120.4 C369.2,127.0 376.3,142.3 382.8,148.0 C389.2,153.7 396.1,156.3 402.1,154.9 C408.0,153.5 414.9,144.8 418.6,139.7 C422.3,134.7 420.9,126.6 424.1,124.6 C427.4,122.5 433.3,129.8 437.9,127.3 C442.5,124.8 448.0,115.4 451.7,109.4 C455.4,103.4 456.3,94.2 460.0,91.4 C463.7,88.7 471.5,92.6 473.8,92.8" stroke="#a455f7" stroke-width="2.200" fill="none" stroke-linecap="round"/>
<path d="M159.3,308.0L173.1,304.7L178.5,330L164.0,330ZM180.8,282.6L194.6,279.3L205.5,330L191.0,330ZM200.7,255.0L215.0,252.0L231.8,330L216.8,330ZM231.0,267.2L245.4,263.9L259.6,330L244.5,330ZM255.9,257.0L269.1,253.7L285.5,330L271.6,330ZM277.9,239.6L292.3,236.3L312.4,330L297.4,330Z" fill="#a647f6"/>
<path d="M316.6,237.7L402.1,221.1M321.5,257.0L385.0,243.2M326.2,275.7L409.0,258.3M331.7,294.2L392.4,281.2M337.2,313.0L418.1,295.6" stroke="#e591f6" stroke-width="3" fill="none"/>
<!-- circles -->
<circle cx="169" cy="68" r="51" fill="#ff3fc0" filter="url(#i3g)" opacity=".9"/>
<circle cx="169" cy="68" r="47.500" fill="url(#i3p)" stroke="#ff8ae2" stroke-width="2.400"/>
<circle cx="293" cy="47" r="48" fill="#b070ff" filter="url(#i3g)" opacity=".45"/>
<circle cx="293" cy="47" r="47.300" fill="url(#i3v)" stroke="#e6b8ff" stroke-width="2.200"/>
<circle cx="410.300" cy="26.600" r="48" fill="#b070ff" filter="url(#i3g)" opacity=".45"/>
<circle cx="410.300" cy="26.600" r="47.300" fill="url(#i3v)" stroke="#e6b8ff" stroke-width="2.200"/>
<g font-family="Liberation Sans, sans-serif" font-size="39" fill="#fff" text-anchor="middle" letter-spacing="-2.600">
<text transform="translate(170,82) rotate(-14)">18%</text>
<text transform="translate(293.500,61.500) rotate(-14)">74%</text>
<text transform="translate(410.500,41) rotate(-14)">23%</text>
</g>
<!-- clock -->
<circle cx="480" cy="240.400" r="44.800" fill="none" stroke="#c9a0ff" stroke-width="5" filter="url(#i3g2)" opacity=".7"/>
<circle cx="480" cy="240.400" r="44.300" fill="#6226ee" fill-opacity=".55" stroke="#fff" stroke-width="2.400"/>
<path d="M470.500,204 L480.700,239.800 L513.800,232" stroke="#fff" stroke-width="2.400" fill="none" stroke-linejoin="round"/>
</svg></div>
    <h3 style="letter-spacing:-1.13px">Template Dashboard for Custom<br>Dataset</h3>
    <p style="top:465px;letter-spacing:-.25px">Template Dashboard for Custom Dataset</p>
    <div class="tag new" style="left:47px;width:80.5px">New</div>
    <div class="tag" style="left:152px;width:128.5px">Template</div>
    <div class="tag" style="left:305px;width:108.5px">custom</div>
    <div class="ft"></div>
    <div class="upd">Updated at: Jul 18, 2025</div>
    <div class="more"><i style="left:12.3px"></i><i style="left:19.3px"></i><i style="left:26.3px"></i></div>
  </div>
</div>

<!-- REPORTS PANEL -->
<div class="panel" id="p2" style="top:1462px;height:400px">
  <div class="ph" style="top:42px;line-height:36px">Reports</div>
  <div class="va" style="top:39px;line-height:36px">View all</div>
  <div class="abs" id="rimg1" style="left:48.5px;top:158px;width:639.33px;height:200px;border-radius:32px 32px 0 0;background:#e6dfd8;overflow:hidden"><svg width="640" height="200" viewBox="0 0 640 200" style="display:block">
<defs>
<linearGradient id="r1bg" x1="0" y1="0" x2="1" y2="0"><stop offset="0" stop-color="#e2dad4"/><stop offset=".6" stop-color="#e5ded8"/><stop offset="1" stop-color="#e8e1da"/></linearGradient>
<linearGradient id="r1a" x1="0" y1="0" x2="0" y2="1"><stop offset="0" stop-color="#62aef2"/><stop offset="1" stop-color="#3778dc"/></linearGradient>
<filter id="r1s" x="-30%" y="-30%" width="160%" height="160%"><feDropShadow dx="-3" dy="5" stdDeviation="4" flood-color="#6a5a50" flood-opacity=".3"/></filter>
</defs>
<rect width="640" height="200" fill="url(#r1bg)"/>
<path d="M400,0 L640,0 L640,200 L560,200 Z" fill="#e9e2dc" opacity=".6"/>
<g filter="url(#r1s)"><path d="M484.500,19.600 a2.500,2.500 0 0 1 3.600,2.200 L485.500,72.500 a2.500,2.500 0 0 1 -4,2 L468.300,65 L436,104 L412,96 L450.900,53.900 L441,45.500 a2.500,2.500 0 0 1 .300,-4.200 Z" fill="url(#r1a)"/></g>
</svg></div>
  <div class="abs" id="rimg2" style="left:719.5px;top:158px;width:640px;height:200px;border-radius:32px 32px 0 0;background:#2a1250;overflow:hidden"><svg width="640" height="200" viewBox="0 0 640 200" style="display:block">
<defs>
<linearGradient id="r2bg" x1="0" y1="0" x2="1" y2="0"><stop offset="0" stop-color="#1a1254"/><stop offset=".35" stop-color="#2a1466"/><stop offset=".7" stop-color="#38165e"/><stop offset="1" stop-color="#4a1656"/></linearGradient>
<linearGradient id="r2a" x1="0" y1="0" x2="1" y2="0"><stop offset="0" stop-color="#2e34e6"/><stop offset=".3" stop-color="#5a30e0"/><stop offset=".6" stop-color="#c545ee"/><stop offset="1" stop-color="#9a34d8"/></linearGradient>
<linearGradient id="r2b" x1="0" y1="0" x2="1" y2="1"><stop offset="0" stop-color="#8a34dc"/><stop offset="1" stop-color="#7424c4"/></linearGradient>
<linearGradient id="r2c" x1="0" y1="0" x2="1" y2="0"><stop offset="0" stop-color="#3a1c96"/><stop offset=".6" stop-color="#7a3ad0"/><stop offset="1" stop-color="#e070f8"/></linearGradient>
<filter id="r2g" x="-30%" y="-30%" width="160%" height="160%"><feGaussianBlur stdDeviation="5"/></filter>
</defs>
<rect width="640" height="200" fill="url(#r2bg)"/>
<!-- grid platform -->
<path d="M215,90 L420,12 L445,14 L640,120 L640,200 L0,200 Z" fill="#1c1a78" opacity=".55"/>
<path d="M330,36 L411,6.500 C425,2 435,5 442,9 L640,116" stroke="#9a3aa8" stroke-width="2" fill="none" opacity=".8"/>
<path d="M215,92 L330,48 M300,82 L240,104 M420,80 L520,52 M440,64 L500,100" stroke="#2a3ee0" stroke-width="2.500" fill="none" opacity=".45"/>
<ellipse cx="416" cy="51" rx="4" ry="2.500" fill="#7a3af0"/>
<!-- left ring -->
<ellipse cx="166" cy="76" rx="52" ry="64" fill="#6a3af0" filter="url(#r2g)" opacity=".35"/>
<ellipse cx="164" cy="76" rx="50" ry="63" fill="url(#r2a)" transform="rotate(-8 164 76)"/>
<ellipse cx="170" cy="80" rx="44" ry="57" fill="url(#r2b)" stroke="#e868f4" stroke-width="1.500" transform="rotate(-8 170 80)"/>
<ellipse cx="171" cy="83" rx="26" ry="38" fill="url(#r2c)" stroke="#f080f8" stroke-width="2" transform="rotate(-8 171 83)"/>
<ellipse cx="167" cy="87" rx="21" ry="33" fill="#4a2098" transform="rotate(-8 167 87)"/>
<!-- middle pin -->
<path d="M358,-40 C300,-40 296,30 330,70 L352,110 L376,110 L396,60 C420,10 410,-40 358,-40 Z" fill="#3a38e8"/>
<path d="M366,-40 C312,-40 308,30 340,75 L356,110 L378,110 L400,56 C422,6 414,-40 366,-40 Z" fill="#8e34dc" stroke="#f070f6" stroke-width="1.800"/>
<ellipse cx="365" cy="26" rx="27" ry="30" fill="url(#r2c)" stroke="#f69cf8" stroke-width="2.400"/>
<ellipse cx="360" cy="22" rx="22" ry="25" fill="#44209a"/>
<!-- right ring -->
<ellipse cx="506" cy="80" rx="47" ry="59" fill="#6a3af0" filter="url(#r2g)" opacity=".3"/>
<ellipse cx="504" cy="80" rx="45" ry="58" fill="url(#r2a)" transform="rotate(-6 504 80)"/>
<ellipse cx="510.500" cy="84" rx="39" ry="54" fill="url(#r2b)" stroke="#e868f4" stroke-width="1.500" transform="rotate(-6 510 84)"/>
<ellipse cx="511" cy="86" rx="23" ry="37" fill="url(#r2c)" stroke="#f080f8" stroke-width="2" transform="rotate(-6 511 86)"/>
<ellipse cx="507" cy="90" rx="18" ry="32" fill="#4a2098" transform="rotate(-6 507 90)"/>
</svg></div>
  <div class="abs" id="rimg3" style="left:1391.17px;top:158px;width:639.33px;height:200px;border-radius:32px 32px 0 0;background:#ebe2d9;overflow:hidden"><svg width="640" height="200" viewBox="0 0 640 200" style="display:block">
<defs>
<radialGradient id="r3o" cx=".68" cy=".25" r=".85"><stop offset="0" stop-color="#f9d070"/><stop offset=".45" stop-color="#f4a03c"/><stop offset="1" stop-color="#df7c2c"/></radialGradient>
<radialGradient id="r3b" cx=".7" cy=".25" r=".85"><stop offset="0" stop-color="#6c64ea"/><stop offset=".5" stop-color="#4038d2"/><stop offset="1" stop-color="#3026c0"/></radialGradient>
<radialGradient id="r3p" cx=".7" cy=".25" r=".85"><stop offset="0" stop-color="#9080ee"/><stop offset=".5" stop-color="#6450d0"/><stop offset="1" stop-color="#5038bc"/></radialGradient>
<filter id="r3s" x="-30%" y="-30%" width="160%" height="160%"><feDropShadow dx="-3" dy="4" stdDeviation="4" flood-color="#6a5040" flood-opacity=".3"/></filter>
</defs>
<rect width="640" height="200" fill="#ebe2d9"/>
<path d="M300,0 L470,0 L150,200 L0,200 L0,180 Z" fill="#eee6de" opacity=".7"/>
<path d="M510,0 L640,0 L640,200 L330,200 Z" fill="#eee6de" opacity=".6"/>
<g filter="url(#r3s)">
<circle cx="98.500" cy="81.200" r="32" fill="url(#r3b)"/>
<circle cx="280.800" cy="81.300" r="30.900" fill="url(#r3p)"/>
<circle cx="192.400" cy="57.400" r="40.800" fill="url(#r3o)"/>
<path d="M528.5,50.8 a4.5,4.5 0 0 1 6,4.200 L534.5,112 L512,104 L497.500,77.200 L490,68.500 a3,3 0 0 1 1,-5 Z" fill="#aa68d2"/>
</g>
</svg></div>
</div>

<div class="abs" style="left:128px;top:1668px;width:3298px;height:35px;background:linear-gradient(180deg,rgba(0,0,0,0),rgba(0,0,0,.035))"></div>
<!-- MENU -->
<div id="menu">
  <div style="top:21px">Edit</div>
  <div style="top:85px">Duplicate</div>
  <div style="top:150px;letter-spacing:-.24px">Add to Favorites</div>
  <hr>
  <div style="top:231px;color:#e5534f">Delete</div>
</div>
</body>
</html>
